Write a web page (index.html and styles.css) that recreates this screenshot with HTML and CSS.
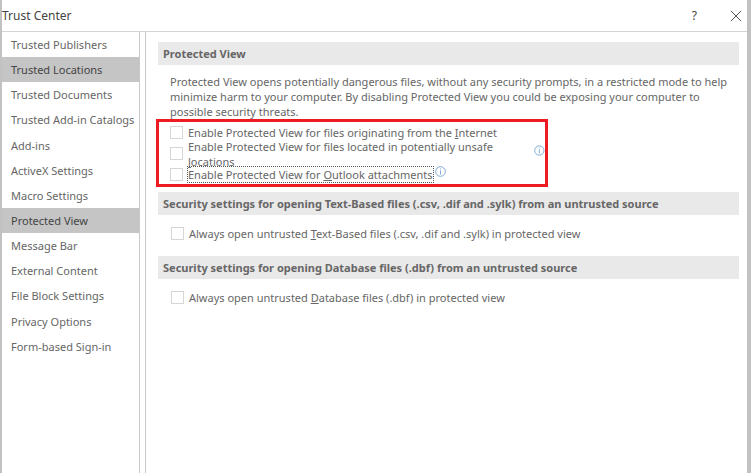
FILE: index.html
```html
<!DOCTYPE html>
<html lang="en">

<head>
    <meta charset="UTF-8">
    <meta name="viewport" content="width=device-width, initial-scale=1.0">
    <title>Trust Center</title>
    <link rel="stylesheet" href="styles.css">
</head>

<body>

    <div class="dialog">
        <div class="titlebar">
            <span class="title">Trust Center</span>
            <span class="help">?</span>
            <svg class="close" width="12" height="12" viewBox="0 0 12 12">
                <path d="M1 1 L11 11 M11 1 L1 11" stroke="#555" stroke-width="1" fill="none" />
            </svg>
        </div>

        <div class="columns">
            <!-- Left menu -->
            <ul class="menu">
                <li>Trusted Publishers</li>
                <li class="selected">Trusted Locations</li>
                <li>Trusted Documents</li>
                <li>Trusted Add-in Catalogs</li>
                <li>Add-ins</li>
                <li>ActiveX Settings</li>
                <li>Macro Settings</li>
                <li class="selected">Protected View</li>
                <li>Message Bar</li>
                <li>External Content</li>
                <li>File Block Settings</li>
                <li>Privacy Options</li>
                <li>Form-based Sign-in</li>
            </ul>

            <!-- Settings panel -->
            <div class="panel">
                <h2 class="section-head">Protected View</h2>
                <p class="intro">Protected View opens potentially dangerous files, without any security prompts, in a restricted mode to help minimize harm to your computer. By disabling Protected View you could be exposing your computer to possible security threats.</p>

                <div class="highlight">
                    <div class="option">
                        <span class="check"></span>
                        <span>Enable Protected View for files originating from the <u>I</u>nternet</span>
                    </div>
                    <div class="option">
                        <span class="check"></span>
                        <span>Enable Protected View for files located in potentially unsafe <u>l</u>ocations</span>
                        <svg class="info" width="11" height="11" viewBox="0 0 11 11">
                            <circle cx="5.5" cy="5.5" r="4.8" stroke="#7fa9d6" fill="none" />
                            <path d="M5.5 2.5 V3.5 M5.5 4.5 V8.5" stroke="#7fa9d6" fill="none" />
                        </svg>
                    </div>
                    <div class="option">
                        <span class="check"></span>
                        <span class="focused">Enable Protected View for <u>O</u>utlook attachments</span>
                        <svg class="info" width="11" height="11" viewBox="0 0 11 11">
                            <circle cx="5.5" cy="5.5" r="4.8" stroke="#7fa9d6" fill="none" />
                            <path d="M5.5 2.5 V3.5 M5.5 4.5 V8.5" stroke="#7fa9d6" fill="none" />
                        </svg>
                    </div>
                </div>

                <h2 class="section-head">Security settings for opening Text-Based files (.csv, .dif and .sylk) from an untrusted source</h2>
                <div class="option single">
                    <span class="check"></span>
                    <span>Always open untrusted <u>T</u>ext-Based files (.csv, .dif and .sylk) in protected view</span>
                </div>

                <h2 class="section-head">Security settings for opening Database files (.dbf) from an untrusted source</h2>
                <div class="option single">
                    <span class="check"></span>
                    <span>Always open untrusted <u>D</u>atabase files (.dbf) in protected view</span>
                </div>
            </div>
        </div>
    </div>

</body>

</html>
```

FILE: styles.css
```css
html,
body {
    height: 100%;
}

body {
    margin: 0;
    font-family: "Noto Sans", "Open Sans", sans-serif;
    font-size: 11px;
    color: #666;
    background-color: #fff;
}

.dialog {
    height: 473px;
    box-sizing: border-box;
    border-left: 2px solid #c2c2c2;
    border-right: 4px solid #c2c2c2;
    display: flex;
    flex-direction: column;
}

.titlebar {
    height: 32px;
    flex: none;
    display: flex;
    align-items: center;
    border-bottom: 1px solid #d4d4d4;
    box-sizing: border-box;
    position: relative;
}

.title {
    color: #444;
    font-size: 12px;
    flex: 1;
}

.help {
    color: #444;
    font-size: 12px;
    margin-right: 33px;
}

.close {
    margin-right: 5px;
}

.columns {
    flex: 1;
    display: flex;
}

.menu {
    list-style: none;
    margin: 0;
    padding: 0;
    width: 137px;
    border-right: 1px solid #c8c8c8;
    box-sizing: content-box;
}

.menu li {
    height: 25.15px;
    line-height: 25px;
    padding-left: 9px;
}

.menu li.selected {
    background-color: #c5c5c5;
    color: #444;
}

.panel {
    flex: 1;
    margin-left: 5px;
    border-left: 1px solid #c8c8c8;
    padding: 10px 8px 0 12px;
}

.section-head {
    margin: 0;
    height: 23px;
    line-height: 23px;
    padding-left: 5px;
    font-size: 11px;
    font-weight: bold;
    color: #666;
    background-color: #e9e9e9;
}

.intro {
    margin: 9px 0 0 12px;
    line-height: 15px;
}

.highlight {
    margin: 0 0 0 -2px;
    border: 3px solid #ed1c24;
    width: 386px;
    height: 62px;
    margin-bottom: 5px;
}

.option {
    display: flex;
    align-items: center;
    height: 21px;
    padding-left: 11px;
}

.option.single {
    height: 21px;
    margin: 8px 0 12px;
    padding-left: 13px;
}

.check {
    width: 11px;
    height: 11px;
    border: 1px solid #d6d6d6;
    margin-right: 5px;
    flex: none;
}

.focused {
    outline: 1px dotted #555;
    line-height: 15px;
}

.info {
    margin: -6px 0 0 2px;
}
```
